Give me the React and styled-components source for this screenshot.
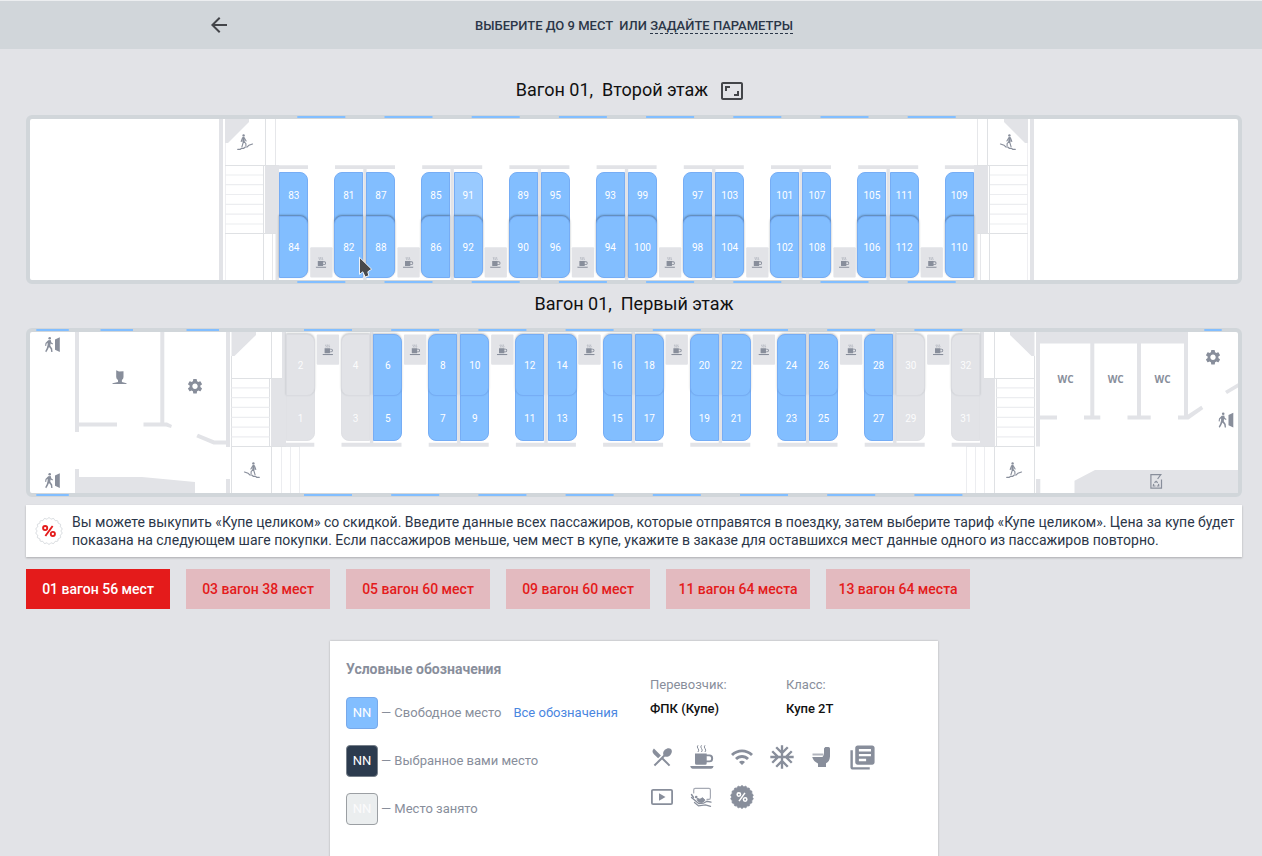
import React from "react";
import styled, { createGlobalStyle, css } from "styled-components";
import {
  MdArrowBack,
  MdAspectRatio,
  MdSettings,
  MdWifi,
  MdAcUnit,
  MdLibraryBooks,
  MdRestaurantMenu,
} from "react-icons/md";

const color = {
  page: "#e2e3e7",
  bar: "#d1d6da",
  wall: "#e2e3e7",
  line: "#dfe1e4",
  faint: "#efeff2",
  free: "#82beff",
  freeEdge: "#76adf5",
  ink: "#2b3648",
  muted: "#888e9b",
  red: "#e41b1b",
};

const GlobalStyle = createGlobalStyle`
  * { box-sizing: border-box; }
  body {
    margin: 0;
    background: ${color.page};
    font-family: Roboto, "Liberation Sans", sans-serif;
    overflow: hidden;
  }
  svg { display: block; flex: none; }
`;

const Page = styled.div`
  position: relative;
  height: 856px;
  overflow: hidden;
`;

const TopBar = styled.header`
  display: flex;
  align-items: center;
  height: 49px;
  padding: 0 207px;
  border-top: 1px solid #eceef0;
  background: ${color.bar};
`;

const BackButton = styled.button`
  display: flex;
  padding: 0;
  border: 0;
  background: none;
  color: #434549;
`;

const TopText = styled.div`
  flex: 1;
  padding: 2px 0 0 244px;
  white-space: pre;
  font-size: 13px;
  font-weight: 500;
  line-height: 16px;
  color: ${color.ink};
`;

const ParamsLink = styled.a`
  border-bottom: 1px dashed ${color.ink};
`;

const FloorTitle = styled.h2`
  display: flex;
  justify-content: center;
  align-items: center;
  gap: 12px;
  height: ${(p) => (p.$first ? 48 : 38)}px;
  margin: ${(p) => (p.$first ? "16px 0 2px" : "0 0 6px")};
  padding-right: ${(p) => (p.$first ? 2 : 0)}px;
  white-space: pre;
  font-size: 18px;
  font-weight: 400;
  color: #111;
  svg { color: #434549; margin-top: 4px; }
`;

const Content = styled.main`
  padding: 0 20px 0 26px;
`;

const Car = styled.section`
  display: grid;
  width: 1216px;
  height: 169px;
  border: 4px solid ${color.bar};
  border-radius: 6px;
  background: #fff;
  > * { grid-area: 1 / 1; }
`;

const Plan = styled.svg`
  width: 1216px;
  height: 169px;
  margin: -4px;
`;

const SeatRow = styled.div`
  display: flex;
  gap: 26px;
  align-items: flex-start;
  padding: ${(p) => (p.$lower ? "2px 0 0 256px" : "52.5px 0 0 249.3px")};
`;

const Block = styled.div`
  display: flex;
  gap: 3.2px;
`;

const Stack = styled.div`
  display: flex;
  flex-direction: column;
  width: 29px;
`;

const Seat = styled.button`
  position: relative;
  display: flex;
  align-items: center;
  justify-content: center;
  width: 29px;
  height: ${(p) => (p.$lower && !p.$front ? 63 : p.$lower ? 61.5 : 62)}px;
  border: 1px solid ${(p) => (p.$taken ? "#dadbe0" : color.freeEdge)};
  border-radius: ${(p) => (p.$side === "left" ? "8px 0 0 8px" : "0 8px 8px 0")};
  background: ${(p) => (p.$taken ? color.wall : p.$hover ? "#99caff" : color.free)};
  color: ${(p) => (p.$taken ? "rgba(255,255,255,.9)" : "#fff")};
  font: 400 10px Roboto, sans-serif;
  ${(p) =>
    p.$front
      ? css`
          z-index: 1;
          padding: 1px 0 0;
          box-shadow: 0 -1px 2px rgba(40, 50, 60, ${p.$lower ? 0.25 : 0.45});
        `
      : css`
          padding: ${p.$lower ? "19px 0 0" : "0 0 15px"};
          border-color: ${p.$taken ? "#e0e1e5" : color.freeEdge};
        `}
  ${(p) => (p.$second ? "margin-top: -18px;" : "")}
`;

const Notice = styled.aside`
  display: flex;
  align-items: center;
  gap: 9px;
  width: 1216px;
  height: 52px;
  margin-top: 8px;
  padding: 0 0 0 9px;
  background: #fff;
  box-shadow: 0 1px 2px rgba(0, 0, 0, 0.25);
  font-size: 14px;
  line-height: 18px;
  white-space: nowrap;
  color: ${color.ink};
`;

const Tabs = styled.nav`
  display: flex;
  gap: 16px;
  margin-top: 12px;
`;

const Tab = styled.button`
  width: 144px;
  height: 40px;
  padding: 0;
  border: 0;
  background: ${(p) => (p.$active ? color.red : "#e3babf")};
  color: ${(p) => (p.$active ? "#fff" : color.red)};
  font: 500 14px Roboto, sans-serif;
`;

const Legend = styled.section`
  display: flex;
  width: 608px;
  height: 240px;
  margin: 32px 0 0 304px;
  padding: 16px;
  background: #fff;
  box-shadow: 0 0 2px rgba(0, 0, 0, 0.25);
  font-size: 13px;
  color: ${color.muted};
`;

const LegendColumn = styled.div`
  width: 304px;
`;

const LegendHeading = styled.h3`
  margin: 4px 0 20px;
  font-size: 14px;
  font-weight: 700;
  line-height: 16px;
`;

const LegendItem = styled.div`
  display: flex;
  align-items: center;
  height: 32px;
  margin-bottom: 16px;
  line-height: 14px;
  white-space: pre;
`;

const Swatch = styled.span`
  display: flex;
  align-items: center;
  justify-content: center;
  width: 32px;
  height: 32px;
  margin-right: 3px;
  border: 1px solid ${(p) => p.$edge};
  border-radius: 4px;
  background: ${(p) => p.$fill};
  color: ${(p) => p.$text || "#fff"};
`;

const AllLink = styled.a`
  margin-left: 12px;
  color: #4a86e0;
`;

const Facts = styled.dl`
  display: grid;
  grid-template-columns: 136px 136px;
  margin: 20px 0 28px;
  line-height: 16px;
`;

const Fact = styled.div`
  dt { margin: 0 0 8px; }
  dd { margin: 0; font-weight: 500; color: #111; }
`;

const Services = styled.div`
  display: grid;
  grid-template-columns: repeat(6, 24px);
  grid-auto-rows: 24px;
  gap: 16px;
  place-items: center;
`;

const Pointer = styled.svg`
  position: absolute;
  left: 358px;
  top: 256px;
  z-index: 5;
`;

function Cup({ x, y, size = 24 }) {
  return (
    <svg x={x} y={y} width={size} height={size} viewBox="0 0 24 24" fill={color.muted}>
      <path d="M5 8.5h11.7v1h2.8a3.6 3.6 0 0 1 3.6 3.6v.6a3.6 3.6 0 0 1-3.6 3.6h-2.8v1a1.5 1.5 0 0 1-1.5 1.5H6.5A1.5 1.5 0 0 1 5 18.3zm11.7 2.7v4.4h2.5a1.9 1.9 0 0 0 1.9-1.9v-.6a1.9 1.9 0 0 0-1.9-1.9z" />
      <path d="M.2 21h23.4q-.4 2.700-2.400 2.700H2.600Q.6 23.700.2 21z" />
      <path
        d="M8 .3q-1.500 1.700 0 3.200t0 3.500M11.500.3q-1.500 1.700 0 3.200t0 3.500M15 .3q-1.500 1.700 0 3.200t0 3.500"
        fill="none"
        stroke={color.muted}
        strokeWidth="1"
      />
    </svg>
  );
}

function Toilet() {
  return (
    <svg width="24" height="24" viewBox="0 0 24 24" fill={color.muted}>
      <path d="M14 3.500 15.300 2H18.500Q20 2 20 3.500V11.500Q19.500 17 16 18.200V22H8V18.500Q3.500 16.500 2.200 12H12.500L14 9.500z" />
      <path d="M2.500 8.500h11v2h-11z" opacity=".65" />
    </svg>
  );
}

function Video() {
  return (
    <svg width="24" height="24" viewBox="0 0 24 24" fill="none">
      <rect x="1.900" y="4.900" width="20.200" height="14.300" rx="1.200" stroke={color.muted} strokeWidth="1.800" />
      <path d="M9 8.200 15.500 12 9 15.800z" fill={color.muted} />
    </svg>
  );
}

function Bedding() {
  return (
    <svg width="24" height="24" viewBox="0 0 24 24" fill="none" stroke={color.muted} strokeLinecap="round">
      <path d="M3.700 8V5Q3.700 3.400 5.200 3.400H19Q20.400 3.400 20.400 5V12.500Q20.400 14.400 19 14.400H17" strokeWidth="1.200" opacity=".75" />
      <path d="M1.500 9.500 3.500 12.500" strokeWidth="1.400" />
      <path d="M7.500 13.500 10 14.300 12.500 12.800 15 15.200 13.200 17 10.500 17.600Q9 17.400 7.500 15.500z" fill={color.muted} strokeWidth="1" />
      <circle cx="6.200" cy="12" r="1.300" fill={color.muted} stroke="none" />
      <path d="M1.500 12.500 8.800 18.600 13.500 18.200 17 16.300 21 17.200M4.500 17.500 8.500 20.900 15.500 19.900 20.500 21.300" strokeWidth="1.300" />
    </svg>
  );
}

function scallop(cx, cy, r, depth, lobes) {
  const points = [];
  const steps = lobes * 8;
  for (let i = 0; i < steps; i += 1) {
    const a = (i / steps) * Math.PI * 2;
    const d = r - depth + depth * Math.cos(a * lobes);
    points.push(`${(cx + d * Math.sin(a)).toFixed(2)} ${(cy - d * Math.cos(a)).toFixed(2)}`);
  }
  return `M${points.join("L")}Z`;
}

function PercentBadge({ size, fill, edge, ink, scale = 1 }) {
  return (
    <svg width={size} height={size} viewBox="-14 -14 28 28">
      <path d={scallop(0, 0, 13.3, 0.6, 18)} fill={fill} stroke={edge} strokeWidth="1" />
      <g transform={`scale(${scale})`} fill="none" stroke={ink} strokeWidth="1.700">
        <circle cx="-3.500" cy="-2.700" r="1.900" />
        <circle cx="3.500" cy="2.700" r="1.900" />
        <path d="M3.300-4.600-3.300 4.600" />
      </g>
    </svg>
  );
}

function StairsIcon({ x, y, flip }) {
  return (
    <g
      transform={`translate(${x} ${y}) scale(${flip ? -1 : 1} 1)`}
      fill="none"
      stroke={color.muted}
      strokeLinecap="round"
    >
      <path d="M-7.300 7.300h2.500l1.500-1h2l1.500-1.300h2L4 3.200 7.500 2" strokeWidth="1.200" />
      <circle cx="-1.400" cy="-6.600" r="1.200" fill={color.muted} stroke="none" />
      <path d="M-1.500-4.200V-.8" strokeWidth="2.300" />
      <path d="M-2.500-4-3.800-.5M-.5-3.700 1.100-1M-1.500-.5l-1.600 5.300M-1-.5.9 1.700v2" strokeWidth="1.100" />
    </g>
  );
}

function ExitIcon({ x, y }) {
  return (
    <g transform={`translate(${x} ${y})`} fill={color.muted}>
      <circle cx="4.700" cy="1.300" r="1.300" />
      <path d="M3.200 3.200 5.700 3 6.400 5.500 8 6.600 7.500 7.600 5.500 6.500 5.300 8.700 7.200 11.500 7.500 15H6.200L5.700 12 4 10 2.600 13 1.200 15.200.2 14.300 1.700 11.300 2.600 8V5.800L1.500 6.800 1.200 9 .1 8.700.5 6z" />
      <path d="M10 2.500 14.800.3V15L10 12.700z" />
    </g>
  );
}

function PersonIcon({ x, y }) {
  return (
    <g transform={`translate(${x} ${y})`} fill={color.muted}>
      <path d="M3.700-.8 6.500.6 11 .2V6Q11 7.800 9.400 9V10.900L14 12.200V13H0V12.200L5.500 10.900V9Q3.700 8 3.700 6z" />
    </g>
  );
}

function BinIcon({ x, y }) {
  return (
    <g transform={`translate(${x} ${y})`} fill="none" stroke={color.muted} strokeWidth="1.200">
      <path d="M11.200 5.500V14.200H.6V.6H10.500L7.300 5" />
      <path d="M4.200 8.800 5.800 7.400 7.400 8.800M8.200 9.900 8.500 12H6.500M5.200 12H3L3.400 9.900" />
    </g>
  );
}

const PITCH = 87.2;
const eight = Array.from({ length: 8 }, (_, i) => i);

function Windows({ start, rows }) {
  return rows.map((y) =>
    eight.map((i) => (
      <rect key={`${y}-${i}`} x={start + i * PITCH} y={y} width="48" height="2" fill={color.free} />
    ))
  );
}

const steps = [175, 184.7, 194.5, 204.4, 214.2, 224];

function UpperStairs() {
  return (
    <g>
      <path d="M219 119h4v161h-4z" fill={color.wall} />
      <path d="M225 119h24v3L228 143h-3z" fill={color.wall} />
      <path d="M265 165h11v69h-11zM275.500 165h3.500v115h-3.500z" fill={color.wall} />
      <path d="M225.500 143V280" stroke={color.faint} />
      <path d="M275.500 119v46M272.500 234v46" stroke="#e6e7ea" />
      <path d="M265.500 119v46M225 165.500h51M225 233.500h51M263.500 165v115" stroke={color.line} />
      {steps.map((y) => (
        <path key={y} d={`M225 ${y}h38`} stroke="#ecedf0" strokeWidth="1.200" />
      ))}
      <StairsIcon x={245} y={142} />
    </g>
  );
}

function LowerStairs() {
  return (
    <g>
      <path d="M231.500 332H256v3L234.500 356h-3z" fill={color.wall} />
      <path d="M271 378h11v68.500h-11zM282 332h4v114.500h-4z" fill={color.wall} />
      <path d="M231.500 356V493" stroke={color.line} />
      <path d="M281.500 446v47M290.500 446v47M299.500 446v47" stroke="#ecedf0" />
      <path d="M271.500 332v46M271.500 446v47M231 378.500h51M231 446.500h69M269.500 378v68" stroke={color.line} />
      {steps.map((y) => (
        <path key={y} d={`M231.500 ${y + 212.9}h38`} stroke="#ecedf0" strokeWidth="1.200" />
      ))}
      <StairsIcon x={252} y={470} flip />
    </g>
  );
}

function UpperPlan() {
  return (
    <Plan viewBox="26 115 1216 169">
      <Windows start={297.3} rows={[116, 281]} />
      <UpperStairs />
      <g transform="translate(1253 0) scale(-1 1)">
        <UpperStairs />
      </g>
      <path d="M276 165.300h32v3.700h-32zM944.900 165.300h32v3.700h-32z" fill={color.wall} />
      {eight.map((i) => (
        <g key={i} transform={`translate(${i * PITCH} 0)`}>
          {i < 7 && <path d="M335 165.300h60v3.700h-60zM363.300 169h3.300v111h-3.300z" fill={color.wall} />}
          <rect x="310.200" y="247.300" width="22.300" height="30.300" rx="1" fill={color.wall} />
          <Cup x={315.5} y={257} size={11} />
        </g>
      ))}
    </Plan>
  );
}

function LowerPlan() {
  return (
    <Plan viewBox="26 328 1216 169">
      <Windows start={304} rows={[329, 494]} />
      <path
        d="M36.300 329h32.500v2H36.300zM100.500 329H133v2h-32.500zM186.500 329H219v2h-32.500zM36.300 494h32.500v2H36.300zM1204.300 329h17.400v2h-17.400z"
        fill={color.free}
      />
      <g fill={color.wall}>
        <path d="M75 332h4v90.500h38v4H79V432h-4z" />
        <path d="M160.300 332h4v90.500H167l5 2.500-1 3-5-1.500h-22.500v-4h16.800z" />
        <path d="M226 332h4v115h-4v-2.600H213.500L196.300 437.300 198 433.800 214.500 440.500H226z" />
        <path d="M75 469h4v8h63l53 5v11H75zM226 479h4v14h-4z" />
        <path d="M1036 332h152v11.600h-148v71.900h17v4h-17v27h-4zM1036 479h4.300v14h-4.300z" />
        <path d="M1090.300 343h4v72.500h6v4H1084v-4h6.300zM1137 343h4v72.500h9.700v4h-23.200v-4h9.500z" />
        <path d="M1184 343h4v71.500L1201.300 405.700 1203.300 409 1188.500 419.500H1178v-4h6z" />
        <path d="M1225 391 1238 383.300V387.500L1227 394zM1074.500 493V480.700L1095 470h143v23z" />
      </g>
      <LowerStairs />
      <g transform="translate(1266 0) scale(-1 1)">
        <LowerStairs />
      </g>
      <path d="M286 442.700h28.300v4H286zM951.700 442.700H983v4h-31.300z" fill={color.wall} />
      {eight.map((i) => (
        <g key={i} transform={`translate(${i * PITCH} 0)`}>
          {i < 7 && <path d="M341.500 442.700h60v4h-60zM369.900 332h3.400v111h-3.400z" fill={color.wall} />}
          <rect x="316.700" y="334.500" width="22.400" height="30.200" rx="1" fill={color.wall} />
          <Cup x={322.3} y={344.3} size={11} />
        </g>
      ))}
      <ExitIcon x={45} y={337} />
      <ExitIcon x={45} y={473} />
      <ExitIcon x={1218.5} y={412.5} />
      <PersonIcon x={112.5} y={371} />
      <BinIcon x={1150.3} y={474} />
      <MdSettings x="186" y="377.300" size={18} color={color.muted} />
      <MdSettings x="1204" y="348.300" size={18} color={color.muted} />
      <g fill={color.muted} fontFamily="Open Sans, sans-serif" fontSize="10" fontWeight="700" textAnchor="middle">
        <text x="1065.500" y="382.600">WC</text>
        <text x="1115.700" y="382.600">WC</text>
        <text x="1162.500" y="382.600">WC</text>
      </g>
    </Plan>
  );
}

/* Every block is a list of stacks, every stack holds [top, bottom]. */
const upperBlocks = [
  [[83, 84]],
  [[81, 82], [87, 88]],
  [[85, 86], [91, 92]],
  [[89, 90], [95, 96]],
  [[93, 94], [99, 100]],
  [[97, 98], [103, 104]],
  [[101, 102], [107, 108]],
  [[105, 106], [111, 112]],
  [[109, 110]],
];

const lowerBlocks = [
  [[2, 1]],
  [[4, 3], [6, 5]],
  [[8, 7], [10, 9]],
  [[12, 11], [14, 13]],
  [[16, 15], [18, 17]],
  [[20, 19], [22, 21]],
  [[24, 23], [26, 25]],
  [[28, 27], [30, 29]],
  [[32, 31]],
];

const taken = new Set([1, 2, 3, 4, 29, 30, 31, 32]);

function Seats({ blocks, lower }) {
  return (
    <SeatRow $lower={lower}>
      {blocks.map((block, b) => (
        <Block key={b}>
          {block.map((pair, s) => (
            <Stack key={s}>
              {pair.map((n, i) => (
                <Seat
                  key={n}
                  $lower={lower}
                  $front={lower ? i === 0 : i === 1}
                  $second={i === 1}
                  $side={b === 0 || s === 1 ? "right" : "left"}
                  $taken={taken.has(n)}
                  $hover={n === 91}
                >
                  {n}
                </Seat>
              ))}
            </Stack>
          ))}
        </Block>
      ))}
    </SeatRow>
  );
}

const cars = [
  "01 вагон 56 мест",
  "03 вагон 38 мест",
  "05 вагон 60 мест",
  "09 вагон 60 мест",
  "11 вагон 64 места",
  "13 вагон 64 места",
];

export default function App() {
  return (
    <Page>
      <GlobalStyle />
      <TopBar>
        <BackButton>
          <MdArrowBack size={24} />
        </BackButton>
        <TopText>
          {"ВЫБЕРИТЕ ДО 9 МЕСТ  ИЛИ "}
          <ParamsLink>ЗАДАЙТЕ ПАРАМЕТРЫ</ParamsLink>
        </TopText>
      </TopBar>
      <FloorTitle $first>
        {"Вагон 01,  Второй этаж"}
        <MdAspectRatio size={24} />
      </FloorTitle>
      <Content>
        <Car>
          <UpperPlan />
          <Seats blocks={upperBlocks} />
        </Car>
        <FloorTitle>{"Вагон 01,  Первый этаж"}</FloorTitle>
        <Car>
          <LowerPlan />
          <Seats blocks={lowerBlocks} lower />
        </Car>
        <Notice>
          <PercentBadge size={28} fill="#fff" edge="#d5d9dd" ink={color.red} scale={1.1} />
          <div>
            Вы можете выкупить «Купе целиком» со скидкой. Введите данные всех пассажиров, которые отправятся в поездку,
            затем выберите тариф «Купе целиком». Цена за купе будет
            <br />
            показана на следующем шаге покупки. Если пассажиров меньше, чем мест в купе, укажите в заказе для
            оставшихся мест данные одного из пассажиров повторно.
          </div>
        </Notice>
        <Tabs>
          {cars.map((label, i) => (
            <Tab key={label} $active={i === 0}>
              {label}
            </Tab>
          ))}
        </Tabs>
        <Legend>
          <LegendColumn>
            <LegendHeading>Условные обозначения</LegendHeading>
            <LegendItem>
              <Swatch $fill={color.free} $edge="#78a9ea">NN</Swatch>— Свободное место
              <AllLink>Все обозначения</AllLink>
            </LegendItem>
            <LegendItem>
              <Swatch $fill="#2c3b4e" $edge="#77808a">NN</Swatch>— Выбранное вами место
            </LegendItem>
            <LegendItem>
              <Swatch $fill="#ebeeef" $edge="#9b9fa3" $text="#fbfbfc">NN</Swatch>— Место занято
            </LegendItem>
          </LegendColumn>
          <div>
            <Facts>
              <Fact>
                <dt>Перевозчик:</dt>
                <dd>ФПК (Купе)</dd>
              </Fact>
              <Fact>
                <dt>Класс:</dt>
                <dd>Купе 2Т</dd>
              </Fact>
            </Facts>
            <Services>
              <MdRestaurantMenu size={24} />
              <Cup />
              <MdWifi size={24} />
              <MdAcUnit size={28} />
              <Toilet />
              <MdLibraryBooks size={29} />
              <Video />
              <Bedding />
              <PercentBadge size={24} fill={color.muted} edge={color.muted} ink="#fff" scale={1.05} />
            </Services>
          </div>
        </Legend>
      </Content>
      <Pointer width="16" height="24" viewBox="0 0 16 24">
        <path
          d="M1.500 1.300V18.300L4.800 15.800 7.200 21 10.800 19.700 9.800 15.800 13.600 13.200z"
          fill="#48494b"
          stroke="#fff"
          strokeWidth=".9"
        />
      </Pointer>
    </Page>
  );
}
